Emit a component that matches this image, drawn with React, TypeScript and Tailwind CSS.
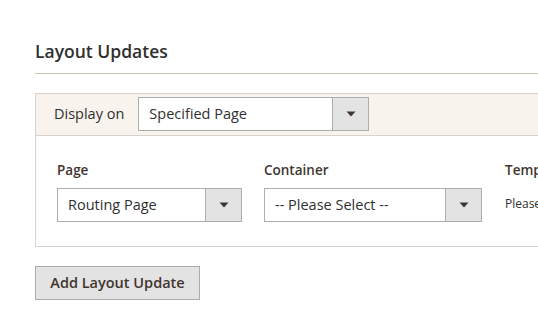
import React from "react";

function Arrow() {
  return (
    <svg width="10" height="6" viewBox="0 0 10 6" aria-hidden="true">
      <path d="M0.5 0.5 L9.5 0.5 L5 5.5 Z" fill="#41362f" />
    </svg>
  );
}

function Select({ label, width }: { label: string; width: string }) {
  return (
    <div className={`flex h-[34px] ${width} border border-[#adadad] bg-white`}>
      <div className="flex flex-1 items-center pl-[10px] text-[14.5px] text-[#303030] whitespace-nowrap">
        {label}
      </div>
      <div className="flex w-[36px] items-center justify-center border-l border-[#adadad] bg-[#e3e3e3]">
        <Arrow />
      </div>
    </div>
  );
}

export default function App() {
  return (
    <div
      className="h-[324px] w-[538px] overflow-hidden bg-white pl-[35px] pt-[38px]"
      style={{ fontFamily: '"Open Sans", sans-serif' }}
    >
      <h2 className="text-[17.5px] font-semibold leading-[26px] text-[#303030]">Layout Updates</h2>
      <div className="mt-[9px] h-px w-[503px] bg-[#cac3b4]" />
      <div className="mt-[19px] w-[520px] border border-r-0 border-[#d6d3cc]">
        <div className="flex h-[42px] items-start border-b border-[#d6d3cc] bg-[#f8f3ed] pl-[18px] pt-[3px]">
          <span className="mt-[7px] text-[14.5px] leading-[20px] text-[#303030]">Display on</span>
          <div className="ml-[14px]">
            <Select label="Specified Page" width="w-[231px]" />
          </div>
        </div>
        <div className="flex h-[110px] pl-[21px] pt-[24px]">
          <div className="w-[207px] shrink-0">
            <div className="text-[13.5px] font-semibold leading-[20px] text-[#41362f]">Page</div>
            <div className="mt-[8px]">
              <Select label="Routing Page" width="w-[185px]" />
            </div>
          </div>
          <div className="w-[241px] shrink-0">
            <div className="text-[13.5px] font-semibold leading-[20px] text-[#41362f]">Container</div>
            <div className="mt-[8px]">
              <Select label="-- Please Select --" width="w-[218px]" />
            </div>
          </div>
          <div className="shrink-0">
            <div className="text-[13.5px] font-semibold leading-[20px] text-[#41362f]">Template</div>
            <div className="mt-[16px] text-[12px] leading-[16px] text-[#303030]">Please Select Container First</div>
          </div>
        </div>
      </div>
      <button className="mt-[19px] h-[34px] w-[165px] border border-[#adadad] bg-[#e3e3e3] text-[14.5px] font-semibold text-[#41362f]">
        Add Layout Update
      </button>
    </div>
  );
}
